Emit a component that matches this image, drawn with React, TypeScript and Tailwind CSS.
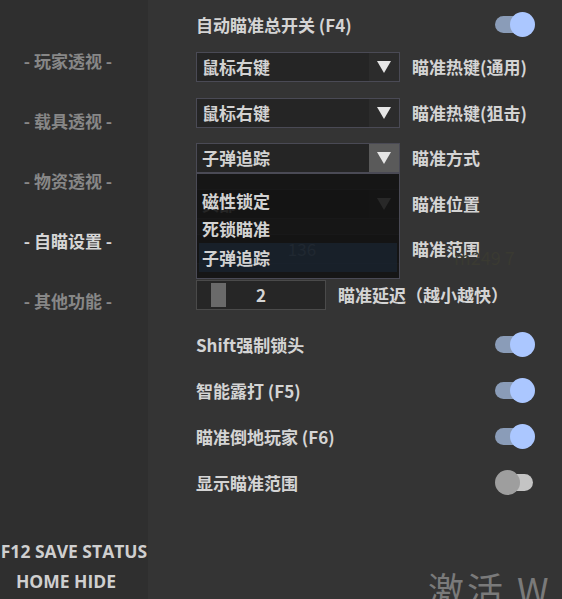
import React from "react";

const FONT = { fontFamily: '"Noto Sans CJK SC", "Noto Sans", sans-serif' };

function Arrow() {
  return (
    <svg width="16" height="14" viewBox="0 0 16 14">
      <polygon points="1,1 15,1 8,13" fill="#e6e6e6" />
    </svg>
  );
}

function Select({ value, active }: { value: string; active?: boolean }) {
  return (
    <div className="flex h-[30px] w-[204px] border border-[#4a4a55] bg-[#252525]">
      <div className="flex flex-1 items-center pl-[5px] text-[17px] font-bold text-[#d2d2d2]">{value}</div>
      <div className={`flex w-[30px] items-center justify-center ${active ? "bg-[#5a5a5a]" : "bg-[#2c2c2c]"}`}>
        <Arrow />
      </div>
    </div>
  );
}

function Toggle({ on }: { on: boolean }) {
  return on ? (
    <div className="relative h-[26px] w-[40px]">
      <div className="absolute left-0 top-[4px] h-[17px] w-[28px] rounded-full bg-[#8a9cb8]" />
      <div className="absolute right-0 top-0 h-[25px] w-[25px] rounded-full bg-[#abc7ff]" />
    </div>
  ) : (
    <div className="relative h-[26px] w-[40px]">
      <div className="absolute right-[2px] top-[4px] h-[17px] w-[28px] rounded-full bg-[#c4c4c4]" />
      <div className="absolute left-0 top-0 h-[25px] w-[25px] rounded-full bg-[#9e9e9e]" />
    </div>
  );
}

function ToggleRow({ label, on }: { label: string; on: boolean }) {
  return (
    <div className="flex h-[46px] items-center justify-between pr-[27px]">
      <span className="text-[17px] font-bold text-[#d4d4d4]">{label}</span>
      <Toggle on={on} />
    </div>
  );
}

export default function App() {
  const nav = ["玩家透视", "载具透视", "物资透视", "自瞄设置", "其他功能"];
  return (
    <div className="relative flex h-[599px] w-[562px] overflow-hidden bg-[#343434]" style={FONT}>
      <div className="flex w-[148px] flex-col bg-[#2f2f2f] pt-[31px]">
        {nav.map((n) => (
          <div
            key={n}
            className={`flex h-[60px] items-center justify-center text-[17px] font-bold ${
              n === "自瞄设置" ? "text-[#d6d6d6]" : "text-[#878787]"
            }`}
            style={{ marginLeft: -12 }}
          >
            - {n} -
          </div>
        ))}
        <div
          className="mt-auto mb-[3px] flex flex-col items-center text-[17.5px] font-bold text-[#cfcfcf]"
          style={{ fontFamily: '"Open Sans", "Noto Sans", sans-serif' }}
        >
          <div className="flex h-[30px] items-center whitespace-nowrap">F12 SAVE STATUS</div>
          <div className="flex h-[30px] items-center whitespace-nowrap" style={{ marginLeft: -16 }}>HOME HIDE</div>
        </div>
      </div>

      <div className="relative flex flex-1 flex-col pl-[48px] pt-[2px]">
        <ToggleRow label="自动瞄准总开关 (F4)" on={true} />
        <div className="mt-[4px] flex flex-col gap-[15.5px]">
          <div className="flex h-[30px] items-center gap-[12px]">
            <Select value="鼠标右键" />
            <span className="text-[17px] font-bold text-[#d4d4d4]">瞄准热键(通用)</span>
          </div>
          <div className="flex h-[30px] items-center gap-[12px]">
            <Select value="鼠标右键" />
            <span className="text-[17px] font-bold text-[#d4d4d4]">瞄准热键(狙击)</span>
          </div>
          <div className="relative z-10 flex h-[30px] items-center gap-[12px]">
            <Select value="子弹追踪" active />
            <span className="text-[17px] font-bold text-[#d4d4d4]">瞄准方式</span>
            <div className="absolute left-0 top-[30px] h-[106px] w-[204px] border border-[#4a4a55] bg-[#131313]/[0.9] pt-[13px]">
              <div className="flex h-[28px] items-center pl-[5px] text-[17px] font-bold text-[#d2d2d2]">磁性锁定</div>
              <div className="flex h-[28px] items-center pl-[5px] text-[17px] font-bold text-[#d2d2d2]">死锁瞄准</div>
              <div className="mx-[2px] flex h-[29px] items-center bg-[#1c2a3a]/[0.55] pl-[3px] text-[17px] font-bold text-[#d2d2d2]">
                子弹追踪
              </div>
            </div>
          </div>
          <div className="flex h-[30px] items-center gap-[12px]">
            <Select value="头部" />
            <span className="text-[17px] font-bold text-[#d4d4d4]">瞄准位置</span>
          </div>
          <div className="relative flex h-[30px] items-center gap-[12px]">
            <div className="flex h-[30px] w-[204px] items-center justify-center border border-[#4a4a55] bg-[#252525] text-[17px] text-[#d2d2d2]">
              <span className="ml-[8px]">136</span>
            </div>
            <span className="text-[17px] font-bold text-[#d4d4d4]">瞄准范围</span>
            <span className="absolute left-[258px] top-[10px] text-[18px] text-[#3a3a32]">m249 7</span>
          </div>
          <div className="flex h-[30px] items-center gap-[12px]">
            <div className="relative flex h-[30px] w-[130px] items-center justify-center border border-[#4a4a4a] bg-[#262626]">
              <div className="absolute left-[14px] top-[2px] h-[24px] w-[15px] bg-[#6a6a6a]" />
              <span className="text-[17px] font-bold text-[#d4d4d4]">2</span>
            </div>
            <span className="text-[17px] font-bold text-[#d4d4d4]">瞄准延迟（越小越快）</span>
          </div>
        </div>
        <div className="mt-[12px] flex flex-col">
          <ToggleRow label="Shift强制锁头" on={true} />
          <ToggleRow label="智能露打 (F5)" on={true} />
          <ToggleRow label="瞄准倒地玩家 (F6)" on={true} />
          <ToggleRow label="显示瞄准范围" on={false} />
        </div>
      </div>

      <div className="absolute left-[428px] top-[563px] whitespace-nowrap text-[36px] leading-[50px] tracking-[3px] text-[#7a7a7a]">激活 W</div>
    </div>
  );
}
